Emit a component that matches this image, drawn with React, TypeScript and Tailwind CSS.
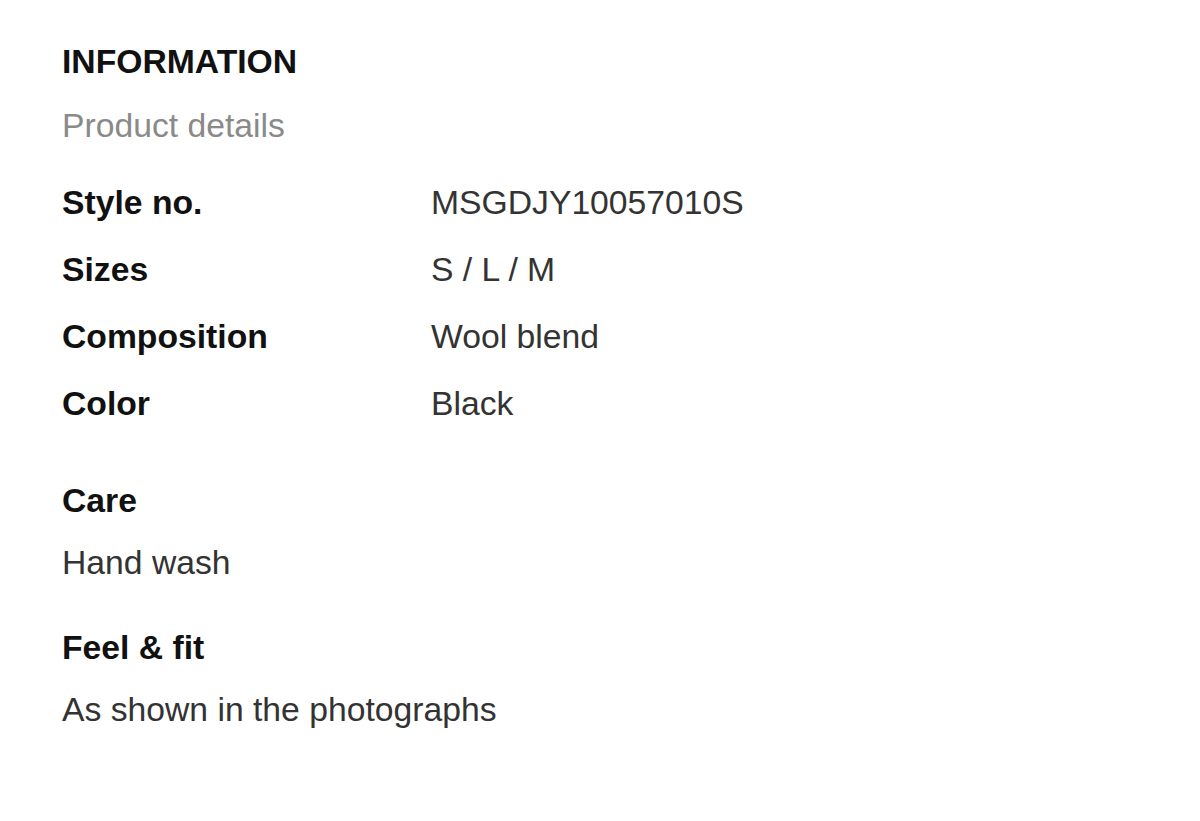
import React from "react";

const details = [
  { label: "Style no.", value: "MSGDJY10057010S" },
  { label: "Sizes", value: "S / L / M" },
  { label: "Composition", value: "Wool blend" },
  { label: "Color", value: "Black" },
];

const App = () => {
  return (
    <div className="min-h-screen bg-white pl-[62px] pt-[41px] font-['Liberation_Sans',Arial,sans-serif] text-[33.7px] leading-[40px]">
      <h2 className="font-bold text-[#111111]">INFORMATION</h2>
      <p className="mt-6 text-[#8a8a8a]">Product details</p>

      <div className="mt-[37px] flex flex-col gap-[27px]">
        {details.map((row) => (
          <div key={row.label} className="flex">
            <span className="w-[369px] font-bold text-[#111111]">{row.label}</span>
            <span className="text-[#333333]">{row.value}</span>
          </div>
        ))}
      </div>

      <h3 className="mt-[57px] font-bold text-[#111111]">Care</h3>
      <p className="mt-[22px] text-[#333333]">Hand wash</p>

      <h3 className="mt-[45px] font-bold text-[#111111]">Feel &amp; fit</h3>
      <p className="mt-[22px] text-[#333333]">As shown in the photographs</p>
    </div>
  );
};

export default App;
